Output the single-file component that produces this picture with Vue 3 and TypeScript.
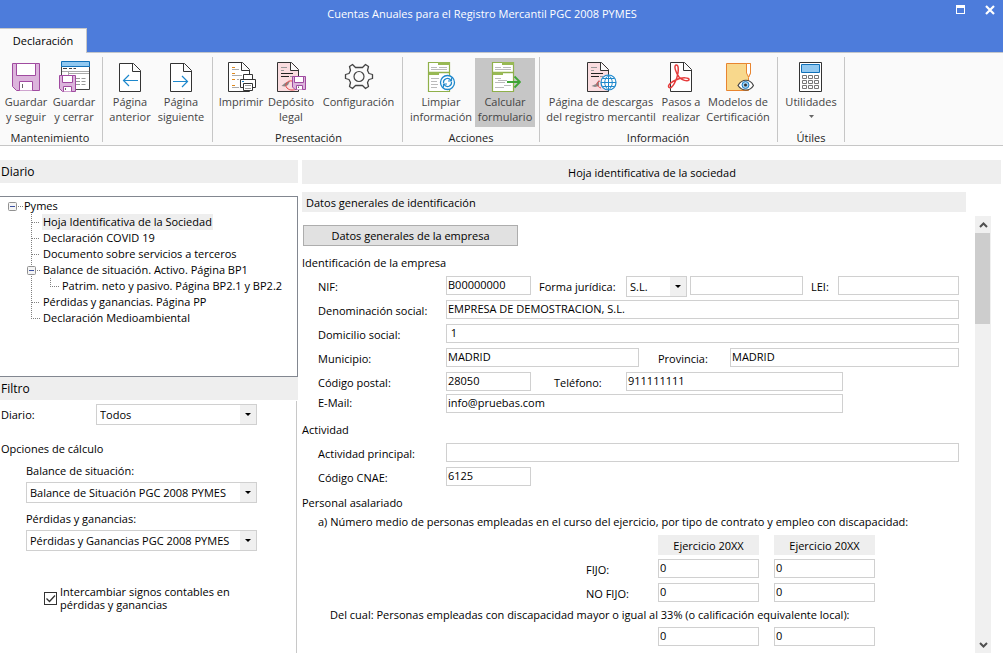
<script setup lang="ts">
import { ref } from 'vue'

type Guide = 'none' | 'box' | 'line' | 'tee' | 'end' | 'boxtee'

interface TreeRow {
  text: string
  level: number
  guides: Guide[]
}

const rows: TreeRow[] = [
  { text: 'Pymes', level: 1, guides: ['box'] },
  { text: 'Hoja Identificativa de la Sociedad', level: 2, guides: ['none', 'tee'] },
  { text: 'Declaración COVID 19', level: 2, guides: ['none', 'tee'] },
  { text: 'Documento sobre servicios a terceros', level: 2, guides: ['none', 'tee'] },
  { text: 'Balance de situación. Activo. Página BP1', level: 2, guides: ['none', 'boxtee'] },
  { text: 'Patrim. neto y pasivo. Página BP2.1 y BP2.2', level: 3, guides: ['none', 'line', 'end'] },
  { text: 'Pérdidas y ganancias. Página PP', level: 2, guides: ['none', 'tee'] },
  { text: 'Declaración Medioambiental', level: 2, guides: ['none', 'end'] },
]
const selected = ref(1)

const guidePaths: Record<Guide, string> = {
  none: '',
  box: 'M13 8.5H18',
  line: 'M7.5 0V16',
  tee: 'M7.5 0V16M8 8.5H16',
  end: 'M7.5 0V8M7 8.5H16',
  boxtee: 'M7.5 0V16M13 8.5H17',
}

const nif = ref('B00000000')
const legalForm = ref('S.L.')
const legalFormOther = ref('')
const lei = ref('')
const companyName = ref('EMPRESA DE DEMOSTRACION, S.L.')
const address = ref(' 1')
const town = ref('MADRID')
const province = ref('MADRID')
const postcode = ref('28050')
const phone = ref('911111111')
const email = ref('info@pruebas.com')
const activity = ref('')
const cnae = ref('6125')
const staff = ref([['0', '0'], ['0', '0'], ['0', '0']])
const swapSigns = ref(true)
</script>

<template>
  <div class="app">
    <header class="titlebar">
      <h1 class="title">Cuentas Anuales para el Registro Mercantil PGC 2008 PYMES</h1>
      <button class="win" type="button" aria-label="Maximizar">
        <svg width="10" height="10" viewBox="0 0 10 10"><path d="M1 0H10V9H1ZM2 3V8H9V3Z" fill="#fff" fill-rule="evenodd" /></svg>
      </button>
      <button class="win" type="button" aria-label="Cerrar">
        <svg width="10" height="10" viewBox="0 0 10 10"><path d="M1 1L9 9M9 1L1 9" stroke="#fff" stroke-width="2.2" /></svg>
      </button>
    </header>
    <div class="tabs"><button class="tab" type="button">Declaración</button></div>

    <nav class="ribbon">
      <section class="group g-save">
        <div class="tools">
          <button class="tool w48" type="button">
            <svg class="icon" viewBox="0 0 32 32">
              <path d="M2.5 2.5H29.5V29.5H6.5L2.5 25.5Z" fill="#dcb4dc" stroke="#a04ba0" />
              <path d="M6.5 2.5H25.5V14.5H6.5Z" fill="#fff" stroke="#a04ba0" />
              <path d="M9.5 29.5V20.5H22.5V29.5" fill="#fff" stroke="#a04ba0" />
              <path d="M12.5 23V27" stroke="#666" />
            </svg>
            <span>Guardar<br>y seguir</span>
          </button>
          <button class="tool w48" type="button">
            <svg class="icon" viewBox="0 0 32 32">
              <path d="M3.5 5.5H31.5V28.5H17.5M3.5 5.5V14" fill="#fff" stroke="#444" />
              <path d="M3.5 .5H31.5V5.5H3.5Z" fill="#91c8f0" stroke="#1070b8" />
              <path d="M5 7.5H9M11 7.5H14M15.5 7.5H18" stroke="#444" />
              <path d="M4 10.5H31M10.5 11V14M11 12.5H31" stroke="#aaa" />
              <path d="M18 17.5H29M18 20.5H29M18 23.5H29" stroke="#999" stroke-dasharray="4 1.5" />
              <path d="M1.5 14.5H17.5V30.5H4.5L1.5 27.5Z" fill="#dcb4dc" stroke="#a04ba0" />
              <path d="M4.5 14.5H14.5V21.5H4.5ZM5.5 30.5V25.5H13.5V30.5" fill="#fff" stroke="#a04ba0" />
              <path d="M7.5 27V29" stroke="#666" />
            </svg>
            <span>Guardar<br>y cerrar</span>
          </button>
        </div>
        <h2>Mantenimiento</h2>
      </section>

      <section class="group g-pages">
        <div class="tools">
          <button class="tool w50" type="button">
            <svg class="icon" viewBox="0 0 32 32">
              <path d="M5.5 2.5H19.5L26.5 9.5V30.5H5.5ZM18.5 2.5V10.5H26.5" fill="#fff" stroke="#333" />
              <path d="M9.5 19.5H24M15 14L9.5 19.5L15 25" fill="none" stroke="#1e88cc" stroke-width="1.2" />
            </svg>
            <span>Página<br>anterior</span>
          </button>
          <button class="tool w52" type="button">
            <svg class="icon" viewBox="0 0 32 32">
              <path d="M5.5 2.5H19.5L26.5 9.5V30.5H5.5ZM18.5 2.5V10.5H26.5" fill="#fff" stroke="#333" />
              <path d="M8 20.5H22.5M17 15L22.5 20.5L17 26" fill="none" stroke="#1e88cc" stroke-width="1.2" />
            </svg>
            <span>Página<br>siguiente</span>
          </button>
        </div>
      </section>

      <section class="group g-show">
        <div class="tools">
          <button class="tool w48" type="button">
            <svg class="icon" viewBox="0 0 32 32">
              <path d="M3.5 1.5H17.5L24.5 8.5V30.5H3.5ZM16.5 1.5V9.5H24.5" fill="#fff" stroke="#333" />
              <path d="M7 6.5H10M7 12.5H10M7 18.5H10M7 24.5H10" stroke="#e08a1e" />
              <path d="M7 8.5H14M7 14.5H17M12 18.5H15M7 26.5H14" stroke="#aaa" />
              <path d="M14 16H31V30H14Z" fill="#fafafa" />
              <path d="M18.5 19V13.5H27.5V19" fill="#fff" stroke="#333" />
              <path d="M15.5 18.5H30.5V26.5H15.5Z" fill="#fff" stroke="#333" />
              <path d="M18.5 22.5H27.5V29.5H18.5Z" fill="#fff" stroke="#333" />
              <path d="M20 24.5H26M20 27.5H26" stroke="#999" />
              <path d="M17 20.5H19" stroke="#1e88cc" />
            </svg>
            <span>Imprimir</span>
          </button>
          <button class="tool w52" type="button">
            <svg class="icon" viewBox="0 0 32 32">
              <path d="M2.5 1.5H16.5L23.5 8.5V30.5H2.5ZM15.5 1.5V9.5H23.5" fill="#fadde0" stroke="#333" />
              <path d="M6 6.5H12M6 9.5H9M15 15.5H18" stroke="#999" />
              <path d="M6 12.5H18M6 15.5H14" stroke="#222" />
              <path d="M6.500 25L10 22L15 20L13 24L10 25.500Z" fill="#888" />
              <path d="M17 20C12 19 9 24 12 27C15 30 19 29 22 28" fill="none" stroke="#e84848" />
              <path d="M17.5 15.5H30.5V28.5H20L17.5 26Z" fill="#dcb4dc" stroke="#a04ba0" />
              <path d="M19.5 15.5H28.5V21.5H19.5ZM21.5 28.5V24.5H27.5V28.5" fill="#fff" stroke="#a04ba0" />
              <path d="M23.5 25.5V27" stroke="#666" />
            </svg>
            <span>Depósito<br>legal</span>
          </button>
          <button class="tool w82" type="button">
            <svg class="icon" viewBox="0 0 32 32">
              <path d="M12.5 6.5H19.5L22.5 3.5L25.5 5.5L24.5 9.5L26 12.5L29.5 13.5V17.5L26 18.5L24.5 21.5L25.5 25.5L22.5 27.5L19.5 24.5H12.5L9.5 27.5L6.5 25.5L7.5 21.5L6 18.5L2.5 17.5V13.5L6 12.5L7.5 9.5L6.5 5.5L9.5 3.5Z" fill="none" stroke="#444" stroke-width="1.3" stroke-linejoin="round" />
              <circle cx="16" cy="15.5" r="5" fill="none" stroke="#444" stroke-width="1.2" />
            </svg>
            <span>Configuración</span>
          </button>
        </div>
        <h2>Presentación</h2>
      </section>

      <section class="group g-actions">
        <div class="tools">
          <button class="tool w68" type="button">
            <svg class="icon" viewBox="0 0 32 32">
              <path d="M3.5 1.5H24.5V30.5H3.5Z" fill="#fff" stroke="#8fb04a" stroke-width="1.2" />
              <path d="M4 11.5H24" stroke="#8fb04a" stroke-width="1.5" />
              <path d="M13 1H25V4H13ZM4 11H14V14H4Z" fill="#98b954" />
              <path d="M6 6.5H12M14 6.5H22M6 8.5H22M6 17.5H14M6 20.5H12M6 23.5H13M6 26.5H12" stroke="#bbb" />
              <circle cx="22.5" cy="21.5" r="7" fill="#fff" stroke="#1e88cc" stroke-width="1.3" />
              <path d="M18.5 22C18 18 23 15.5 26 19.5M26.5 16.5V20H23M26.5 21C27 25 22 27.5 19 23.5M18.5 26.5V23H22" fill="none" stroke="#1e88cc" stroke-width="1.2" />
            </svg>
            <span>Limpiar<br>información</span>
          </button>
          <button class="tool w60 active" type="button">
            <svg class="icon" viewBox="0 0 32 32">
              <path d="M3.5 1.5H24.5V30.5H3.5Z" fill="#fff" stroke="#8fb04a" stroke-width="1.2" />
              <path d="M4 11.5H24" stroke="#8fb04a" stroke-width="1.5" />
              <path d="M13 1H25V4H13ZM4 11H14V14H4Z" fill="#98b954" />
              <path d="M6 6.5H12M14 6.5H22M6 8.5H22M6 17.5H12M9 19.5H18M6 21.5H16M15 24.5H22M6 26.5H15" stroke="#bbb" />
              <path d="M18 21H31M25.5 15.5L31 21L25.5 26.5" fill="none" stroke="#3fa535" stroke-width="1.8" />
            </svg>
            <span>Calcular<br>formulario</span>
          </button>
        </div>
        <h2>Acciones</h2>
      </section>

      <section class="group g-info">
        <div class="tools">
          <button class="tool w114" type="button">
            <svg class="icon" viewBox="0 0 32 32">
              <path d="M2.5 1.5H16.5L23.5 8.5V30.5H2.5ZM15.5 1.5V9.5H23.5" fill="#fadde0" stroke="#333" />
              <path d="M6 6.5H12M6 9.5H9M15 15.5H18" stroke="#999" />
              <path d="M6 12.5H18M6 15.5H14" stroke="#222" />
              <path d="M6.5 25L11 23L14 19L14 25L10 26Z" fill="#888" />
              <path d="M15 20C10 21 12 26 16 27" fill="none" stroke="#e84848" />
              <circle cx="23.5" cy="21.5" r="7.5" fill="#fff" stroke="#1e88cc" stroke-width="1.2" />
              <path d="M16 21.5H31M23.5 14V29M18 17.5H29M18 25.5H29M23.5 14C18.5 18 18.5 25 23.5 29M23.5 14C28.5 18 28.5 25 23.5 29" fill="none" stroke="#1e88cc" />
            </svg>
            <span>Página de descargas<br>del registro mercantil</span>
          </button>
          <button class="tool w46" type="button">
            <svg class="icon" viewBox="0 0 32 32">
              <path d="M5.5 1.5H19.5L26.5 8.5V30.5H5.5ZM18.5 1.5V9.5H26.5" fill="#fff" stroke="#333" />
              <path d="M11 4C8.5 5 11 12 14 16C17 19 22 21 24 19C25 16.5 17 16 12 18.5C7 20.5 2 24 4 26.5C7 28.5 12 19 13 12C13.5 8 13.5 3.5 11 4Z" fill="none" stroke="#e63c3c" stroke-width="1.5" />
            </svg>
            <span>Pasos a<br>realizar</span>
          </button>
          <button class="tool w68" type="button">
            <svg class="icon" viewBox="0 0 32 32">
              <path d="M4.5 2.5H28.5V12L26.5 16.5V29.5H4.5Z" fill="#f8d88c" stroke="#e88530" />
              <path d="M24.5 2.5H28.5V12L26.5 16L24.5 12Z" fill="#fff" stroke="#e88530" />
              <path d="M16 24.5C20 17.5 28 17.5 31.5 24.5C28 30.5 20 30.5 16 24.5Z" fill="#fff" stroke="#444" stroke-width="1.2" />
              <circle cx="23.5" cy="24" r="3.5" fill="#9fd0f4" stroke="#1c7cc4" />
              <circle cx="23.5" cy="24" r="1.5" fill="#333" />
            </svg>
            <span>Modelos de<br>Certificación</span>
          </button>
        </div>
        <h2>Información</h2>
      </section>

      <section class="group g-utils">
        <div class="tools">
          <button class="tool w60" type="button">
            <svg class="icon" viewBox="0 0 32 32">
              <path d="M4.5 1.5H26.5V30.5H4.5Z" fill="#fff" stroke="#333" />
              <path d="M6.5 3.5H24.5V11.5H6.5Z" fill="#91c8f0" stroke="#1070b8" />
              <path d="M7.5 14.5H11.5V17.5H7.5ZM13.5 14.5H17.5V17.5H13.5ZM19.5 14.5H23.5V17.5H19.5ZM7.5 19.5H11.5V22.5H7.5ZM13.5 19.5H17.5V22.5H13.5ZM19.5 19.5H23.5V22.5H19.5ZM7.5 24.5H11.5V27.5H7.5ZM13.5 24.5H17.5V27.5H13.5ZM19.5 24.5H23.5V27.5H19.5Z" fill="#fff" stroke="#777" />
            </svg>
            <span>Utilidades</span>
            <svg class="caret" width="5" height="3" viewBox="0 0 5 3"><path d="M0 0H5L2.5 3Z" fill="#666" /></svg>
          </button>
        </div>
        <h2>Útiles</h2>
      </section>
    </nav>

    <main class="body">
      <aside class="side">
        <h2 class="bar">Diario</h2>
        <ul class="tree" role="tree" aria-label="Diario">
          <li v-for="(row, i) in rows" :key="row.text" role="treeitem" :aria-level="row.level" :aria-selected="i === selected">
            <svg v-for="(g, k) in row.guides" :key="k" class="guide" width="19" height="16" viewBox="0 0 19 16">
              <path :d="guidePaths[g]" fill="none" stroke="#808080" stroke-dasharray="1 1" />
              <g v-if="g === 'box' || g === 'boxtee'">
                <rect x="3.5" y="4.5" width="8" height="8" rx="1" fill="#f4f4f4" stroke="#919191" />
                <path d="M5 8.5H10" stroke="#3c50a0" />
              </g>
            </svg>
            <button type="button" :class="['node', { on: i === selected }]" @click="selected = i">{{ row.text }}</button>
          </li>
        </ul>
        <h2 class="bar">Filtro</h2>
        <div class="filter">
          <div class="inline">
            <label for="diario">Diario:</label>
            <span class="combo wide"><select id="diario"><option>Todos</option></select></span>
          </div>
          <h3>Opciones de cálculo</h3>
          <div class="stack">
            <label for="balance">Balance de situación:</label>
            <span class="combo"><select id="balance"><option>Balance de Situación PGC 2008 PYMES</option></select></span>
            <label for="pyg">Pérdidas y ganancias:</label>
            <span class="combo"><select id="pyg"><option>Pérdidas y Ganancias PGC 2008 PYMES</option></select></span>
          </div>
          <label class="check">
            <input v-model="swapSigns" type="checkbox">
            <svg v-if="swapSigns" class="tick" width="13" height="13" viewBox="0 0 13 13"><path d="M2.5 6.5L5.5 9.5L11 3.5" fill="none" stroke="#333" stroke-width="1.3" /></svg>
            <span>Intercambiar signos contables en<br>pérdidas y ganancias</span>
          </label>
        </div>
      </aside>

      <section class="content">
        <h2 class="bar main-bar">Hoja identificativa de la sociedad</h2>
        <h3 class="bar sub-bar">Datos generales de identificación</h3>
        <div class="pane">
          <form class="form" @submit.prevent>
            <button class="push" type="button">Datos generales de la empresa</button>

            <h3>Identificación de la empresa</h3>
            <div class="fields">
              <div class="row">
                <label class="first" for="nif">NIF:</label>
                <input id="nif" v-model="nif" class="short" type="text">
                <label class="l-form" for="forma">Forma jurídica:</label>
                <span class="combo tiny"><select id="forma" v-model="legalForm"><option>S.L.</option></select></span>
                <input v-model="legalFormOther" class="other" type="text" aria-label="Otra forma jurídica">
                <label class="l-lei" for="lei">LEI:</label>
                <input id="lei" v-model="lei" class="grow" type="text">
              </div>
              <div class="row">
                <label class="first" for="denom">Denominación social:</label>
                <input id="denom" v-model="companyName" class="grow" type="text">
              </div>
              <div class="row">
                <label class="first" for="domi">Domicilio social:</label>
                <input id="domi" v-model="address" class="grow" type="text">
              </div>
              <div class="row">
                <label class="first" for="muni">Municipio:</label>
                <input id="muni" v-model="town" class="medium" type="text">
                <label class="l-prov" for="prov">Provincia:</label>
                <input id="prov" v-model="province" class="grow" type="text">
              </div>
              <div class="row partial">
                <label class="first" for="cp">Código postal:</label>
                <input id="cp" v-model="postcode" class="short" type="text">
                <label class="l-tel" for="tel">Teléfono:</label>
                <input id="tel" v-model="phone" class="grow" type="text">
              </div>
              <div class="row partial tight">
                <label class="first" for="mail">E-Mail:</label>
                <input id="mail" v-model="email" class="grow" type="text">
              </div>
            </div>

            <h3>Actividad</h3>
            <div class="fields">
              <div class="row">
                <label class="first" for="act">Actividad principal:</label>
                <input id="act" v-model="activity" class="grow" type="text">
              </div>
              <div class="row">
                <label class="first" for="cnae">Código CNAE:</label>
                <input id="cnae" v-model="cnae" class="short" type="text">
              </div>
            </div>

            <h3 class="flush">Personal asalariado</h3>
            <table class="staff">
              <caption>a) Número medio de personas empleadas en el curso del ejercicio, por tipo de contrato y empleo con discapacidad:</caption>
              <colgroup><col class="c-label"><col class="c-year"><col class="c-year"><col></colgroup>
              <thead>
                <tr>
                  <td></td>
                  <th scope="col"><span>Ejercicio 20XX</span></th>
                  <th scope="col"><span>Ejercicio 20XX</span></th>
                </tr>
              </thead>
              <tbody>
                <tr>
                  <th class="kind" scope="row">FIJO:</th>
                  <td v-for="n in 2" :key="n"><input v-model="staff[0][n - 1]" type="text" :aria-label="`Fijo, ejercicio ${n}`"></td>
                </tr>
                <tr>
                  <th class="kind" scope="row">NO FIJO:</th>
                  <td v-for="n in 2" :key="n"><input v-model="staff[1][n - 1]" type="text" :aria-label="`No fijo, ejercicio ${n}`"></td>
                </tr>
                <tr class="note">
                  <th colspan="4" scope="rowgroup">Del cual: Personas empleadas con discapacidad mayor o igual al 33% (o calificación equivalente local):</th>
                </tr>
                <tr>
                  <td></td>
                  <td v-for="n in 2" :key="n"><input v-model="staff[2][n - 1]" type="text" :aria-label="`Con discapacidad, ejercicio ${n}`"></td>
                </tr>
              </tbody>
            </table>
          </form>

          <div class="scrollbar">
            <button type="button" aria-label="Subir">
              <svg width="9" height="6" viewBox="0 0 9 6"><path d="M1 5L4.5 1.5L8 5" fill="none" stroke="#505050" stroke-width="2" /></svg>
            </button>
            <div class="track"><div class="thumb"></div></div>
            <button type="button" aria-label="Bajar">
              <svg width="9" height="6" viewBox="0 0 9 6"><path d="M1 1L4.5 4.5L8 1" fill="none" stroke="#505050" stroke-width="2" /></svg>
            </button>
          </div>
        </div>
      </section>
    </main>
  </div>
</template>

<style>
body {
  background: #fff;
}
</style>

<style scoped>
.app {
  display: flex;
  flex-direction: column;
  min-height: 100vh;
  font-family: "Open Sans", "Noto Sans", sans-serif;
  font-size: 11px;
  line-height: 18px;
  color: #000;
}

.app *,
.app *::before,
.app *::after {
  box-sizing: border-box;
}

h1,
h2,
h3 {
  margin: 0;
  font-size: inherit;
  font-weight: normal;
}

button,
input,
select {
  margin: 0;
  padding: 0;
  font: inherit;
  color: inherit;
  border: 0;
  border-radius: 0;
  background: none;
}

button {
  cursor: pointer;
}

/* Title bar and tabs */
.titlebar {
  display: flex;
  gap: 10px;
  height: 28px;
  padding-right: 3px;
  background: #4d7cdb;
  color: #fff;
}

.title {
  flex: 1;
  padding-left: 24px;
  line-height: 27px;
  text-align: center;
}

.win {
  width: 20px;
  height: 20px;
  display: flex;
  align-items: center;
  justify-content: center;
}

.tabs {
  height: 24px;
  background: #4d7cdb;
}

.tab {
  position: relative;
  width: 87px;
  height: 25px;
  background: #fafafa;
  border-top: 1px solid #c8c8c8;
  border-right: 1px solid #c8c8c8;
}

/* Ribbon */
.ribbon {
  display: flex;
  height: 94px;
  padding: 4px 0 3px;
  background: #fafafa;
  border-top: 1px solid #c3c6cb;
  border-bottom: 1px solid #c6c6c6;
}

.group {
  display: flex;
  flex-direction: column;
  justify-content: space-between;
  padding: 1px 3px 0;
  border-right: 1px solid #c6c6c6;
}

.g-save { padding-left: 2px; padding-right: 4px; }
.g-pages { padding-left: 2px; padding-right: 5px; }
.g-show { padding-left: 4px; padding-right: 2px; }
.g-actions { padding-left: 4px; padding-right: 4px; }
.g-info { padding-left: 4px; padding-right: 5px; }

.tools {
  display: flex;
}

.group h2 {
  height: 12px;
  line-height: 16px;
  text-align: center;
  color: #222;
}

.tool {
  display: flex;
  flex-direction: column;
  align-items: center;
  height: 69px;
  padding-top: 3px;
  line-height: 15px;
  color: #444;
  white-space: nowrap;
}

.tool.active {
  background: #c6c6c6;
}

.icon {
  flex: none;
  width: 32px;
  height: 32px;
  margin-bottom: 1px;
}

.caret {
  margin-top: 6px;
}

.w46 { width: 46px; }
.w48 { width: 48px; }
.w50 { width: 50px; }
.w52 { width: 52px; }
.w60 { width: 60px; }
.w68 { width: 68px; }
.w82 { width: 83px; }
.w114 { width: 114px; }

/* Body */
.body {
  flex: 1;
  display: flex;
  gap: 4px;
  padding: 14px 2px 6px 0;
}

.bar {
  background: #eee;
  height: 23px;
  padding-left: 1px;
  line-height: 23px;
}

.side {
  width: 298px;
  display: flex;
  flex-direction: column;
}

.side .bar {
  font-size: 12px;
}

.tree {
  height: 181px;
  margin: 13px 0 0;
  padding: 1px 0 0 5px;
  border: 1px solid #828790;
  border-left: 0;
  list-style: none;
}

.tree li {
  display: flex;
  height: 16px;
}

.guide {
  flex: none;
}

.node {
  margin-left: -1px;
  padding: 0 1px;
  line-height: 16px;
  white-space: nowrap;
}

.node.on {
  background: #eee;
}

.filter {
  flex: 1;
  margin: 1px 1px 0 0;
  padding: 3px 39px 0 1px;
  border-right: 1px solid #c8c8c8;
}

.inline {
  display: flex;
  align-items: center;
  justify-content: space-between;
}

.filter h3 {
  margin-top: 15px;
}

.stack {
  display: flex;
  flex-direction: column;
  padding-left: 25px;
}

.stack label {
  margin-top: 4px;
  padding-bottom: 2px;
}

.stack .combo {
  margin-bottom: 3px;
}

.combo {
  position: relative;
  display: block;
  height: 21px;
}

.combo.wide {
  width: 161px;
}

.combo select {
  width: 100%;
  height: 21px;
  padding: 0 17px 0 3px;
  appearance: none;
  border: 1px solid #d0d0d0;
  background: linear-gradient(#f0f0f0, #f0f0f0) right / 16px 100% no-repeat #fff;
}

.combo::after {
  content: "";
  position: absolute;
  right: 6px;
  top: 9px;
  border: 3px solid transparent;
  border-top-color: #000;
  border-bottom: 0;
  pointer-events: none;
}

.check {
  position: relative;
  display: flex;
  gap: 3px;
  align-items: center;
  margin: 31px 0 0 43px;
  line-height: 13px;
  white-space: nowrap;
}

.check input {
  flex: none;
  width: 13px;
  height: 13px;
  appearance: none;
  border: 1px solid #333;
  background: #fff;
}

.tick {
  position: absolute;
  left: 0;
  pointer-events: none;
}

/* Form */
.content {
  flex: 1;
  min-width: 0;
  display: flex;
  flex-direction: column;
}

.main-bar {
  height: 24px;
  line-height: 26px;
  text-align: center;
}

.sub-bar {
  height: 20px;
  margin: 8px 35px 0 0;
  padding-left: 4px;
  line-height: 22px;
}

.pane {
  flex: 1;
  display: flex;
  padding-right: 10px;
}

.form {
  flex: 1;
  min-width: 0;
  padding: 13px 16px 0 0;
}

.push {
  display: block;
  width: 215px;
  height: 21px;
  margin-left: 1px;
  border: 1px solid #adadad;
  background: #e1e1e1;
  line-height: 20px;
}

.form h3 {
  margin: 8px 0 4px;
}

.form h3.flush {
  margin-bottom: 0;
}

.fields {
  display: flex;
  flex-direction: column;
  gap: 5px;
  padding-left: 16px;
}

.row {
  display: flex;
  height: 19px;
}

.row label {
  flex: none;
  padding-top: 2px;
  white-space: nowrap;
}

.row.tight {
  margin-top: -2px;
}

.row.tight label {
  padding-top: 0;
}

.partial {
  margin-right: 116px;
}

.form input {
  height: 19px;
  padding: 0 1px 2px;
  border: 1px solid #d0d0d0;
  background: #fff;
}

.row .first { width: 128px; }
.row .short { width: 85px; }
.row .medium { width: 193px; }
.row .other { width: 113px; margin-left: 3px; }
.row .grow { flex: 1; min-width: 0; }
.row .tiny { width: 61px; }
.row .l-form { width: 95px; padding-left: 8px; }
.row .l-lei { width: 35px; padding-left: 8px; }
.row .l-prov { width: 91px; padding-left: 19px; }
.row .l-tel { width: 95px; padding-left: 23px; }

.staff {
  table-layout: fixed;
  width: calc(100% - 16px);
  margin-left: 16px;
  border-collapse: collapse;
}

.staff caption {
  height: 23px;
  line-height: 20px;
  text-align: left;
  white-space: nowrap;
}

.c-label { width: 340px; }
.c-year { width: 116px; }

.staff th,
.staff td {
  height: 24px;
  padding: 0 15px 0 0;
  font-weight: normal;
  vertical-align: top;
}

.staff thead span {
  display: block;
  height: 20px;
  line-height: 22px;
  background: #eee;
}

.staff .kind {
  padding: 2px 0 0 268px;
  text-align: left;
}

.staff .note th {
  height: 20px;
  padding: 0 0 0 12px;
  line-height: 16px;
  text-align: left;
  white-space: nowrap;
}

.staff input {
  display: block;
  width: 100%;
}

.scrollbar {
  display: flex;
  flex-direction: column;
  width: 16px;
  margin-top: 4px;
  background: #f0f0f0;
}

.scrollbar button {
  display: flex;
  align-items: center;
  justify-content: center;
  height: 17px;
}

.track {
  flex: 1;
}

.thumb {
  width: 15px;
  height: 91px;
  background: #cdcdcd;
}
</style>
